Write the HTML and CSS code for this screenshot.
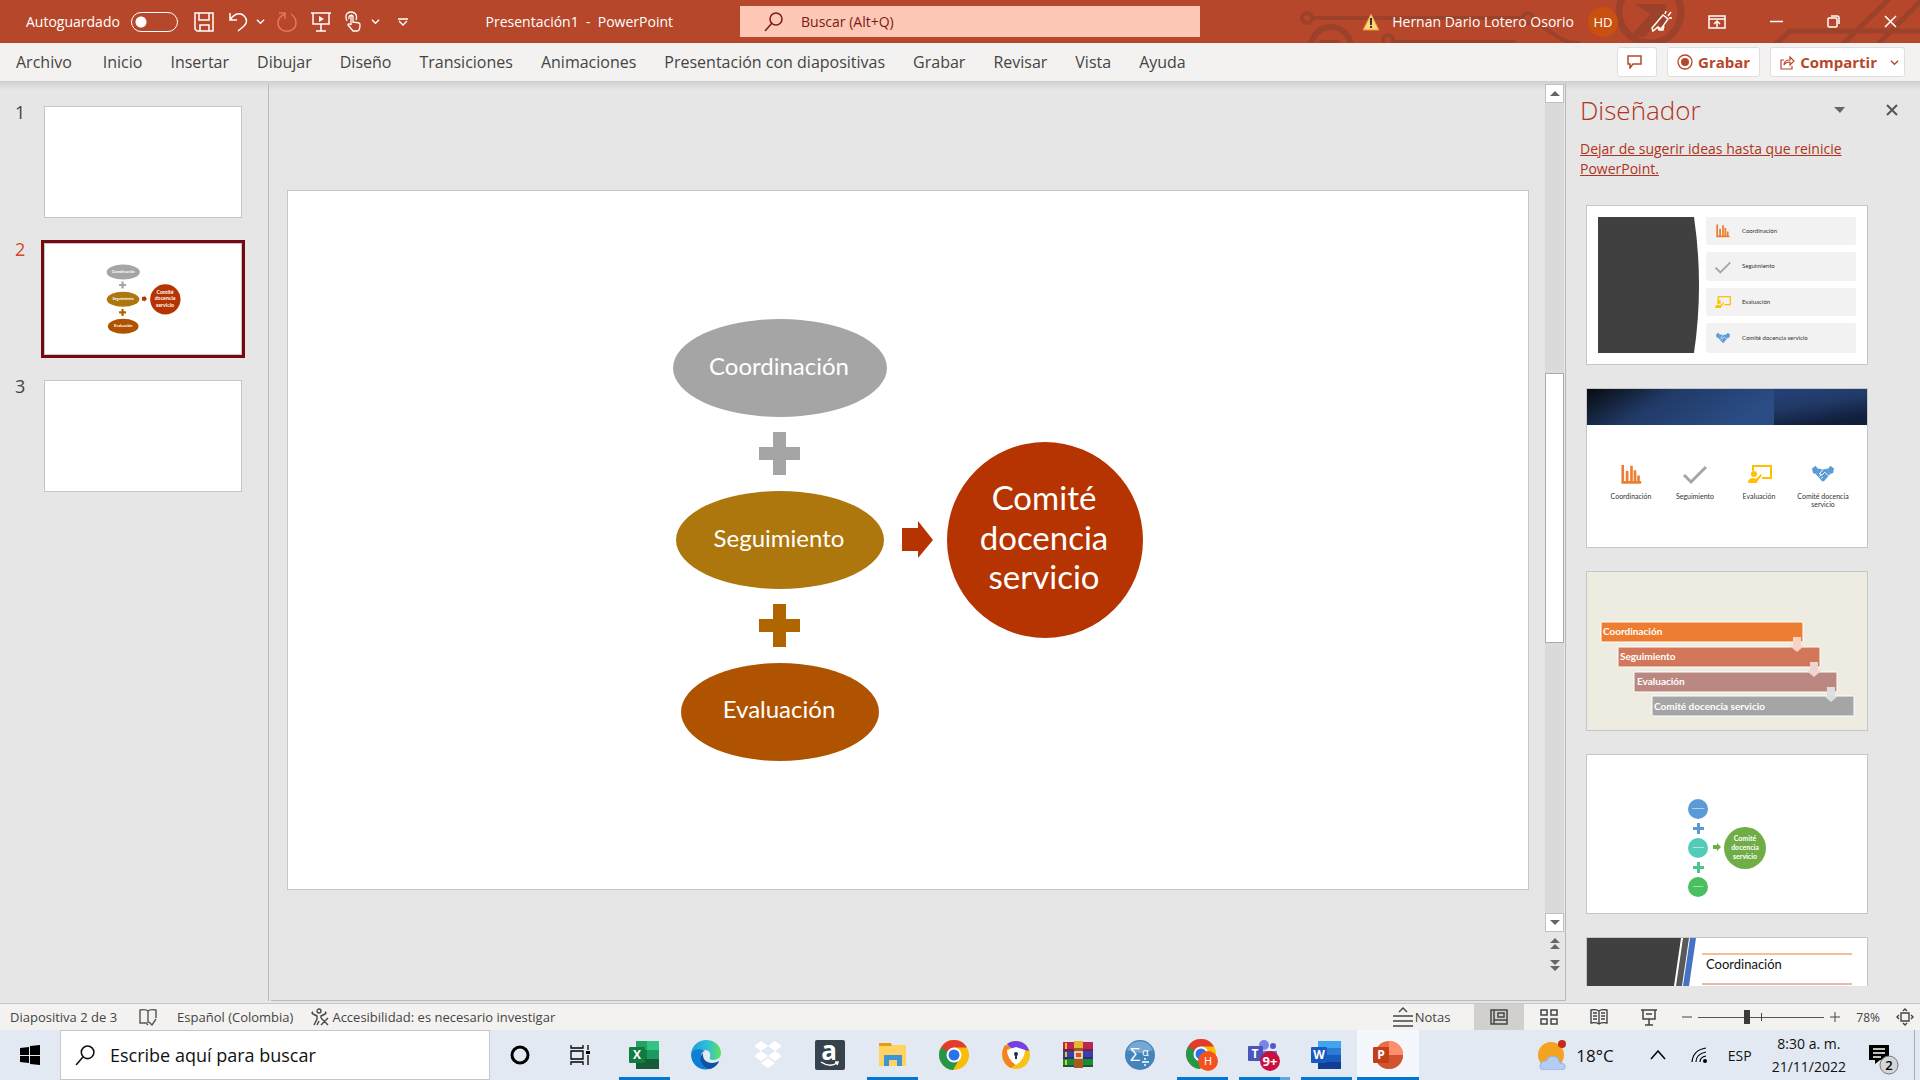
FILE: index.html
```html
<!DOCTYPE html>
<html lang="es">
<head>
    <meta charset="UTF-8">
    <meta name="viewport" content="width=device-width, initial-scale=1.0">
    <title>Presentación1 - PowerPoint</title>
    <link rel="stylesheet" href="styles.css">
</head>
<body>
    <!-- shared icons for the design ideas -->
    <svg class="defs" width="0" height="0" aria-hidden="true">
        <symbol id="i-chart" viewBox="0 0 24 24">
            <path d="M2 1v20h21M7 20V8M12 20V2M16 20V7M20 20v-7" fill="none" stroke="#ed7d31" stroke-width="3"/>
        </symbol>
        <symbol id="i-check" viewBox="0 0 24 24">
            <path d="M1 13l7 7L23 5" fill="none" stroke="#a5a5a5" stroke-width="3"/>
        </symbol>
        <symbol id="i-teach" viewBox="0 0 24 24">
            <path d="M5 9V4h18v12h-9" fill="none" stroke="#ffc000" stroke-width="2"/>
            <circle cx="6" cy="12" r="3" fill="#ffc000"/>
            <path d="M0 21c0-5 5-6 8-4l5-5 1 1-5 7v1z" fill="#ffc000"/>
        </symbol>
        <symbol id="i-hands" viewBox="0 0 24 24">
            <path d="M0 6l4-3 3 4-3 5-3-1zM24 6l-4-3-3 4 3 5 3-1z" fill="#5b9bd5"/>
            <path d="M7 6l5 1 5-1 3 6-7 8h-2l-7-8z" fill="#5b9bd5"/>
            <path d="M12 7l-4 5 3 1 3-3 5 5M8 15l2-2M10 17l2-2" fill="none" stroke="#fff"/>
        </symbol>
        <symbol id="i-search" viewBox="0 0 20 20">
            <circle cx="12" cy="7" r="6" fill="none" stroke="currentColor" stroke-width="1.5"/>
            <path d="M8 11l-7 8" fill="none" stroke="currentColor" stroke-width="1.5"/>
        </symbol>
        <symbol id="i-down" viewBox="0 0 10 10">
            <path d="M1 3l4 4 4-4" fill="none" stroke="currentColor" stroke-width="1.5"/>
        </symbol>
        <symbol id="i-chrome" viewBox="0 0 30 30">
            <circle cx="15" cy="15" r="15" fill="#fbbc05"/>
            <path d="M2 7.500A15 15 0 0 1 28 7.500H15L8 19z" fill="#e33b2e"/>
            <path d="M2 7.500A15 15 0 0 0 14 30l7-12-6-3z" fill="#27954a"/>
            <circle cx="15" cy="15" r="7.500" fill="#fff"/>
            <circle cx="15" cy="15" r="5.500" fill="#2b72ea"/>
        </symbol>
    </svg>

    <header class="titlebar">
        <svg class="circuit" width="620" height="43" viewBox="0 0 620 43" aria-hidden="true">
            <g fill="none" stroke="#9c422a" stroke-width="4">
                <circle cx="7" cy="18" r="5"/>
                <path d="M12 18h210"/>
                <circle cx="228" cy="18" r="5"/>
                <path d="M240 25l18 12q8 6 22 6"/>
                <circle cx="88" cy="40" r="5"/>
                <path d="M94 42h122"/>
                <circle cx="31" cy="47" r="20" stroke-width="6"/>
                <circle cx="350" cy="12" r="31" stroke-width="7"/>
                <path d="M474 45l16-14h130M542 45L590-2M577 45L622 0" stroke-width="5"/>
            </g>
            <path d="M334 4h32v26l-8-7-14 14h-14l20-23z" fill="#9c422a"/>
            <path d="M20 40h20v3H18z" fill="#9c422a"/>
        </svg>

        <div class="title-left">
            <label class="autosave">Autoguardado <input type="checkbox" class="toggle"></label>
            <button class="tool save" aria-label="Guardar">
                <svg width="20" height="20" viewBox="0 0 20 20"><path d="M1 1h18v18H3l-2-2zM5 1v7h10V1M6 19v-6h9v6" fill="none" stroke="#fff" stroke-width="1.5"/></svg>
            </button>
            <button class="tool undo" aria-label="Deshacer">
                <svg width="19" height="20" viewBox="0 0 19 20"><path d="M1 1v7h7M1 8C4 3 9 0 14 3c5 4 4 8 1 11l-6 5" fill="none" stroke="#fff" stroke-width="1.5"/></svg>
            </button>
            <button class="tool caret" aria-label="Más"><svg width="9" height="9"><use href="#i-down"/></svg></button>
            <button class="tool redo" aria-label="Repetir">
                <svg width="20" height="20" viewBox="0 0 20 20"><path d="M2 1h6v6M8 1v1C3 4 1 7 1 11c0 11 18 11 18 0 0-4-2-7-5-9" fill="none" stroke="#e8735a" stroke-width="1.5"/></svg>
            </button>
            <button class="tool show" aria-label="Presentar">
                <svg width="20" height="20" viewBox="0 0 20 20"><path d="M0 1h20M2 1v11h16V1M10 12v7M5 19h10" fill="none" stroke="#fff" stroke-width="1.5"/><path d="M8 4l5 3-5 3z" fill="#fff"/></svg>
            </button>
            <button class="tool touch" aria-label="Modo táctil">
                <svg width="16" height="21" viewBox="0 0 16 21"><path d="M2 10C-1 3 3 1 6 1s7 2 5 8M4 8C3 3 9 3 8 7v5M6 14V6c0-2 2-2 2 0v5l6 1c1 0 1 1 1 2 0 4-1 6-3 6H8l-5-6c0-2 2-1 3 0" fill="none" stroke="#fff" stroke-width="1.3"/></svg>
            </button>
            <button class="tool caret" aria-label="Más"><svg width="9" height="9"><use href="#i-down"/></svg></button>
            <button class="tool custom" aria-label="Personalizar">
                <svg width="10" height="8" viewBox="0 0 10 8"><path d="M0 1h10M1 3l4 4 4-4" fill="none" stroke="#fff" stroke-width="1.3"/></svg>
            </button>
            <h1 class="doc-title">Presentación1&nbsp; -&nbsp; PowerPoint</h1>
        </div>

        <label class="search">
            <svg width="20" height="20"><use href="#i-search"/></svg>
            <input type="text" placeholder="Buscar (Alt+Q)" aria-label="Buscar">
        </label>

        <div class="title-right">
            <svg class="warn" width="18" height="18" viewBox="0 0 18 18"><path d="M9 1l8 16H1z" fill="#ffd77a" stroke="#e8912d"/><path d="M9 5v7M9 13v2" stroke="#333" stroke-width="2"/></svg>
            <span class="user">Hernan Dario Lotero Osorio</span>
            <span class="avatar">HD</span>
            <button class="tool pen" aria-label="Novedades">
                <svg width="21" height="21" viewBox="0 0 21 21"><path d="M1 17L12 4l5 4-7 10-3-2-5 4zM7 16l1 3h4l1-4M14 3l1-3M17 5l3-4M18 7h3" fill="none" stroke="#fff" stroke-width="1.5"/></svg>
            </button>
            <button class="tool win" aria-label="Opciones de cinta">
                <svg width="18" height="14" viewBox="0 0 18 14"><path d="M1 1h16v12H1zM1 4h16M9 12V6M6 9l3-3 3 3" fill="none" stroke="#fff" stroke-width="1.5"/></svg>
            </button>
            <button class="tool win" aria-label="Minimizar">
                <svg width="13" height="13" viewBox="0 0 13 13"><path d="M0 6.500h13" stroke="#fff" stroke-width="1.5"/></svg>
            </button>
            <button class="tool win" aria-label="Restaurar">
                <svg width="13" height="13" viewBox="0 0 13 13"><path d="M1 4q0-1 1-1h7q1 0 1 1v7q0 1-1 1H2q-1 0-1-1zM4 1h6q2 0 2 2v6" fill="none" stroke="#fff" stroke-width="1.5"/></svg>
            </button>
            <button class="tool win" aria-label="Cerrar">
                <svg width="13" height="13" viewBox="0 0 13 13"><path d="M1 1l11 11M12 1L1 12" stroke="#fff" stroke-width="1.5"/></svg>
            </button>
        </div>
    </header>

    <nav class="ribbon">
        <button class="tab file-tab">Archivo</button>
        <button class="tab">Inicio</button>
        <button class="tab">Insertar</button>
        <button class="tab">Dibujar</button>
        <button class="tab">Diseño</button>
        <button class="tab">Transiciones</button>
        <button class="tab">Animaciones</button>
        <button class="tab">Presentación con diapositivas</button>
        <button class="tab">Grabar</button>
        <button class="tab">Revisar</button>
        <button class="tab">Vista</button>
        <button class="tab">Ayuda</button>
        <div class="ribbon-actions">
            <button class="action comment" aria-label="Comentarios">
                <svg width="15" height="14" viewBox="0 0 15 14"><path d="M1 1h13v8H6l-3 4V9H1z" fill="none" stroke="#b7472a" stroke-width="1.5"/></svg>
            </button>
            <button class="action">
                <svg width="16" height="16" viewBox="0 0 16 16"><circle cx="8" cy="8" r="7" fill="none" stroke="#b7472a" stroke-width="1.3"/><circle cx="8" cy="8" r="4" fill="#b7472a"/></svg>
                Grabar
            </button>
            <button class="action">
                <svg width="15" height="15" viewBox="0 0 15 15"><path d="M4 5H1v9h11v-3M4 10c0-4 3-5 6-5V2l4 4-4 4V7C8 7 5 8 4 10z" fill="none" stroke="#b7472a" stroke-width="1.2"/></svg>
                Compartir
                <svg class="share-caret" width="9" height="9"><use href="#i-down"/></svg>
            </button>
        </div>
    </nav>

    <main class="main">
        <aside class="slides">
            <button class="thumb-row"><span>1</span><span class="thumb"></span></button>
            <button class="thumb-row selected"><span>2</span>
                <span class="thumb">
                    <svg viewBox="0 0 1240 698" font-family="Lato, sans-serif" font-weight="700" fill="#fff" text-anchor="middle">
                        <ellipse cx="496" cy="182" rx="104" ry="47" fill="#a5a5a5"/>
                        <path d="M485 241h14v15h15v14h-15v15h-14v-15h-15v-14h15z" fill="#a5a5a5"/>
                        <ellipse cx="495" cy="352" rx="102" ry="47" fill="#ad770e"/>
                        <path d="M485 413h14v15h15v14h-15v15h-14v-15h-15v-14h15z" fill="#af6600"/>
                        <ellipse cx="496" cy="521" rx="96" ry="47" fill="#b05300"/>
                        <path d="M614 337h16v-7l15 19-15 19v-7h-16z" fill="#b53401"/>
                        <circle cx="760" cy="353" r="95" fill="#b53401"/>
                        <text x="496" y="187" font-size="24">Coordinación</text>
                        <text x="495" y="358" font-size="24">Seguimiento</text>
                        <text x="496" y="527" font-size="24">Evaluación</text>
                        <g font-size="33">
                            <text x="758" y="319">Comité</text>
                            <text x="758" y="360">docencia</text>
                            <text x="758" y="400">servicio</text>
                        </g>
                    </svg>
                </span>
            </button>
            <button class="thumb-row"><span>3</span><span class="thumb"></span></button>
        </aside>

        <section class="workspace">
            <div class="slide-area">
                <div class="slide">
                    <svg viewBox="0 0 1240 698" font-family="Lato, sans-serif" fill="#fff" text-anchor="middle">
                        <ellipse cx="492" cy="177" rx="107" ry="49" fill="#a5a5a5"/>
                        <path d="M485 241h13v15h14v13h-14v15h-13v-15h-14v-13h14z" fill="#a5a5a5"/>
                        <ellipse cx="492" cy="349" rx="104" ry="49" fill="#ad770e"/>
                        <path d="M485 413h13v15h14v13h-14v15h-13v-15h-14v-13h14z" fill="#af6600"/>
                        <ellipse cx="492" cy="521" rx="99" ry="49" fill="#b05300"/>
                        <path d="M614 337h16v-7l15 19-15 18v-7h-16z" fill="#b53401"/>
                        <circle cx="757" cy="349" r="98" fill="#b53401"/>
                        <g font-size="24">
                            <text x="491" y="184">Coordinación</text>
                            <text x="491" y="356">Seguimiento</text>
                            <text x="491" y="527">Evaluación</text>
                        </g>
                        <g font-size="33">
                            <text x="756" y="319">Comité</text>
                            <text x="756" y="359">docencia</text>
                            <text x="756" y="398">servicio</text>
                        </g>
                    </svg>
                </div>
            </div>
            <div class="scrollbar">
                <button class="scroll-btn" aria-label="Arriba"><svg width="10" height="5"><path d="M0 5l5-5 5 5z" fill="#666"/></svg></button>
                <div class="scroll-track"><div class="scroll-thumb"></div></div>
                <button class="scroll-btn" aria-label="Abajo"><svg width="10" height="5"><path d="M0 0h10L5 5z" fill="#666"/></svg></button>
                <button class="page-btn" aria-label="Diapositiva anterior"><svg width="10" height="11"><path d="M0 5l5-5 5 5zM0 11l5-5 5 5z" fill="#666"/></svg></button>
                <button class="page-btn" aria-label="Diapositiva siguiente"><svg width="10" height="11"><path d="M0 0h10L5 5zM0 6h10l-5 5z" fill="#666"/></svg></button>
            </div>
        </section>

        <aside class="designer">
            <div class="designer-head">
                <h2>Diseñador</h2>
                <button class="panel-menu" aria-label="Opciones"><svg width="11" height="7"><path d="M0 0h11L6 6z" fill="#666"/></svg></button>
                <button class="panel-close" aria-label="Cerrar panel"><svg width="12" height="12"><path d="M1 1l10 10M11 1L1 11" stroke="#555" stroke-width="2"/></svg></button>
            </div>
            <a href="#" class="stop-link">Dejar de sugerir ideas hasta que reinicie PowerPoint.</a>

            <div class="ideas">
                <button class="idea">
                    <svg viewBox="0 0 280 158" font-family="Lato, sans-serif" font-size="6" fill="#333">
                        <path d="M11 11h96q10 68 0 136H11z" fill="#404040"/>
                        <g fill="#f2f2f2">
                            <rect x="119" y="11" width="150" height="28" rx="2"/>
                            <rect x="119" y="46" width="150" height="29" rx="2"/>
                            <rect x="119" y="82" width="150" height="28" rx="2"/>
                            <rect x="119" y="117" width="150" height="30" rx="2"/>
                        </g>
                        <use href="#i-chart" x="129" y="18" width="14" height="14"/>
                        <use href="#i-check" x="128" y="53" width="16" height="16"/>
                        <use href="#i-teach" x="128" y="88" width="16" height="16"/>
                        <use href="#i-hands" x="129" y="125" width="14" height="14"/>
                        <text x="155" y="27">Coordinación</text>
                        <text x="155" y="62">Seguimiento</text>
                        <text x="155" y="98">Evaluación</text>
                        <text x="155" y="134">Comité docencia servicio</text>
                    </svg>
                </button>
                <button class="idea">
                    <svg viewBox="0 0 280 158" font-family="Lato, sans-serif" font-size="7" fill="#333" text-anchor="middle">
                        <defs>
                            <linearGradient id="banner" x1="0" y1="0" x2="1" y2=".3">
                                <stop offset="0" stop-color="#070b0e"/>
                                <stop offset=".45" stop-color="#213b68"/>
                                <stop offset="1" stop-color="#2b4c85"/>
                            </linearGradient>
                            <linearGradient id="bannerEnd" x1="0" y1="0" x2=".4" y2="1">
                                <stop offset="0" stop-color="#23427a"/>
                                <stop offset=".5" stop-color="#213966"/>
                                <stop offset="1" stop-color="#101f3b"/>
                            </linearGradient>
                        </defs>
                        <path d="M0 0h187v36H0z" fill="url(#banner)"/>
                        <path d="M187 0h93v36h-93z" fill="url(#bannerEnd)"/>
                        <use href="#i-chart" x="34" y="75" width="21" height="21"/>
                        <use href="#i-check" x="96" y="73" width="24" height="24"/>
                        <use href="#i-teach" x="161" y="73" width="24" height="24"/>
                        <use href="#i-hands" x="225" y="74" width="22" height="22"/>
                        <text x="44" y="110">Coordinación</text>
                        <text x="108" y="110">Seguimiento</text>
                        <text x="172" y="110">Evaluación</text>
                        <text x="236" y="110">Comité docencia</text>
                        <text x="236" y="118">servicio</text>
                    </svg>
                </button>
                <button class="idea">
                    <svg viewBox="0 0 280 158" font-family="Lato, sans-serif" font-size="10" font-weight="700" fill="#fff">
                        <path d="M0 0h280v158H0z" fill="#eeebe0"/>
                        <g stroke="#fff">
                            <rect x="14" y="50" width="202" height="20" rx="1" fill="#ed7d31"/>
                            <rect x="31" y="75" width="202" height="20" rx="1" fill="#d27759"/>
                            <rect x="47" y="100" width="203" height="20" rx="1" fill="#ba8880"/>
                            <rect x="65" y="124" width="202" height="20" rx="1" fill="#a5a5a5"/>
                        </g>
                        <path d="M206 65h8v9h3l-7 6-7-6h3z" fill="#f8d2c6"/>
                        <path d="M223 90h8v9h3l-7 6-7-6h3z" fill="#efd5d0"/>
                        <path d="M240 115h8v9h3l-7 6-7-6h3z" fill="#dfdede"/>
                        <text x="16" y="63">Coordinación</text>
                        <text x="33" y="88">Seguimiento</text>
                        <text x="50" y="113">Evaluación</text>
                        <text x="67" y="138">Comité docencia servicio</text>
                    </svg>
                </button>
                <button class="idea">
                    <svg viewBox="0 0 280 158" font-family="Lato, sans-serif" font-weight="700" fill="#fff" text-anchor="middle">
                        <circle cx="111" cy="54" r="10" fill="#5b9bd5"/>
                        <path d="M110 68h3v4h4v3h-4v4h-3v-4h-4v-3h4z" fill="#5b9bd5"/>
                        <circle cx="111" cy="93" r="10" fill="#52cbb8"/>
                        <path d="M110 107h3v4h4v3h-4v4h-3v-4h-4v-3h4z" fill="#4dc48d"/>
                        <circle cx="111" cy="132" r="10" fill="#48c05f"/>
                        <path d="M126 90h4v-2l4 4-4 4v-2h-4z" fill="#70ad47"/>
                        <circle cx="158" cy="93" r="21" fill="#70ad47"/>
                        <g font-size="2">
                            <text x="111" y="54">Coordinación</text>
                            <text x="111" y="93">Seguimiento</text>
                            <text x="111" y="132">Evaluación</text>
                        </g>
                        <g font-size="7">
                            <text x="158" y="86">Comité</text>
                            <text x="158" y="95">docencia</text>
                            <text x="158" y="104">servicio</text>
                        </g>
                    </svg>
                </button>
                <button class="idea">
                    <svg viewBox="0 0 280 158" font-family="Lato, sans-serif" font-size="13" fill="#111">
                        <path d="M0 0h94L71 158H0z" fill="#404040"/>
                        <path d="M96 0h6L79 158h-6z" fill="#595959"/>
                        <path d="M103 0h6L86 158h-6z" fill="#4472c4"/>
                        <path d="M115 16h150" stroke="#ed7d31"/>
                        <path d="M115 46h150" stroke="#d27759"/>
                        <text x="119" y="31">Coordinación</text>
                    </svg>
                </button>
            </div>
        </aside>
    </main>

    <footer class="statusbar">
        <span class="slide-count">Diapositiva 2 de 3</span>
        <button class="plain proof" aria-label="Ortografía">
            <svg width="18" height="18" viewBox="0 0 18 18"><path d="M9 3v12M9 3Q7 1 1 2v13h6l2 2M9 3q2-2 8-1v8M10 14l3 3 4-6" fill="none" stroke="#555" stroke-width="1.4"/></svg>
        </button>
        <button class="plain lang">Español (Colombia)</button>
        <button class="plain access">
            <svg width="18" height="18" viewBox="0 0 18 18"><circle cx="8" cy="3" r="2" fill="none" stroke="#444" stroke-width="1.3"/><path d="M2 4Q0 5 2 6l4 2v3l-3 6M14 4q2 1 0 2l-4 2v2M6 17l2-4M10 10l7 7M17 10l-7 7" fill="none" stroke="#444" stroke-width="1.4"/></svg>
            Accesibilidad: es necesario investigar
        </button>
        <div class="views">
            <button class="plain notes">
                <svg width="20" height="20" viewBox="0 0 20 20"><path d="M6 5l4-4 4 4M0 9h20M0 14h20M0 19h20" fill="none" stroke="#444" stroke-width="1.4"/></svg>Notas
            </button>
            <button class="view active" aria-label="Normal">
                <svg width="18" height="16" viewBox="0 0 18 16"><path d="M1 1h16v14H1zM4 1v14M4 11h13M8 4h6v4H8z" fill="none" stroke="#444" stroke-width="1.5"/></svg>
            </button>
            <button class="view" aria-label="Clasificador">
                <svg width="18" height="16" viewBox="0 0 18 16"><path d="M1 1h6v5H1zM11 1h6v5h-6zM1 10h6v5H1zM11 10h6v5h-6z" fill="none" stroke="#444" stroke-width="1.5"/></svg>
            </button>
            <button class="view" aria-label="Lectura">
                <svg width="18" height="16" viewBox="0 0 18 16"><path d="M9 2v13M9 2Q6 0 1 1v13q5-1 8 1 3-2 8-1V1Q12 0 9 2M3 4h4M3 7h4M3 10h4M11 4h4M11 7h4M11 10h4" fill="none" stroke="#444" stroke-width="1.4"/></svg>
            </button>
            <button class="view" aria-label="Presentación">
                <svg width="16" height="17" viewBox="0 0 16 17"><path d="M0 1h16M2 1v9h12V1M8 10v6M4 16h8M5 5h6" fill="none" stroke="#444" stroke-width="1.5"/></svg>
            </button>
        </div>
        <div class="zoom">
            <button class="plain" aria-label="Alejar"><svg width="10" height="10"><path d="M0 5h10" stroke="#444"/></svg></button>
            <div class="zoom-slide"><input type="range" min="0" max="100" value="38" aria-label="Zoom"></div>
            <button class="plain" aria-label="Acercar"><svg width="10" height="10"><path d="M0 5h10M5 0v10" stroke="#444"/></svg></button>
            <button class="plain percent">78%</button>
            <button class="plain" aria-label="Ajustar">
                <svg width="18" height="18" viewBox="0 0 18 18"><path d="M5 5h8v8H5zM7 3l2-2 2 2M7 15l2 2 2-2M3 7L1 9l2 2M15 7l2 2-2 2" fill="none" stroke="#444" stroke-width="1.4"/></svg>
            </button>
        </div>
    </footer>

    <div class="taskbar">
        <button class="start" aria-label="Inicio">
            <svg width="20" height="20" viewBox="0 0 20 20"><path d="M0 3l9-1v8H0zM10 1l10-1v10H10zM0 11h9v7l-9-1zM10 11h10v9l-10-1z" fill="#000"/></svg>
        </button>
        <label class="task-search">
            <svg width="21" height="21"><use href="#i-search"/></svg>
            <input type="text" placeholder="Escribe aquí para buscar" aria-label="Buscar en Windows">
        </label>
        <button class="task-tool" aria-label="Cortana"><svg width="20" height="20"><circle cx="10" cy="10" r="8" fill="none" stroke="#000" stroke-width="3"/></svg></button>
        <button class="task-tool" aria-label="Vista de tareas">
            <svg width="20" height="20" viewBox="0 0 20 20"><path d="M1 0v3h12V0M1 6h12v8H1zM1 20v-3h12v3M18 0v5M18 10v10" fill="none" stroke="#000" stroke-width="1.3"/><path d="M16 6h4v3h-4z"/></svg>
        </button>
        <div class="apps">
            <button class="app running" aria-label="Excel">
                <svg width="30" height="30" viewBox="0 0 30 30"><path d="M7 1h11v9H7z" fill="#21a366"/><path d="M18 1h12v9H18z" fill="#33c481"/><path d="M7 10h11v9H7z" fill="#107c41"/><path d="M18 10h12v9H18z" fill="#1a9a5c"/><path d="M7 19h23v10H7z" fill="#185c37"/><rect y="7" width="16" height="16" rx="1" fill="#107c41"/><text x="8" y="19" font-family="Open Sans" font-size="12" font-weight="700" fill="#fff" text-anchor="middle">X</text></svg>
            </button>
            <button class="app" aria-label="Edge">
                <svg width="30" height="30" viewBox="0 0 30 30">
                    <defs><linearGradient id="edge"><stop offset="0" stop-color="#1b9de2"/><stop offset=".6" stop-color="#33c3cf"/><stop offset="1" stop-color="#63df58"/></linearGradient></defs>
                    <path d="M0 14C1 5 8 0 15 0c9 0 15 6 15 13 0 5-4 7-8 7-3 0-4-1-3-3 1-4-1-7-5-7C8 10 3 11 0 14z" fill="url(#edge)"/>
                    <path d="M0 14c2-5 9-6 14-3-5 1-5 7-2 12 3 4 9 6 11 4-9 6-23 1-23-13z" fill="#0f7fd6"/>
                    <path d="M12 13c-5 4-2 14 6 16 4 0 9-4 10-8-7 4-17 2-16-8z" fill="#0f54a0"/>
                </svg>
            </button>
            <button class="app" aria-label="Dropbox">
                <svg width="30" height="30" viewBox="0 0 30 30"><path d="M8 1l7 5-7 5-7-5zM22 1l7 5-7 5-7-5zM8 11l7 5-7 5-7-5zM22 11l7 5-7 5-7-5zM8 23l7-5 7 5-7 5z" fill="#fff"/></svg>
            </button>
            <button class="app" aria-label="Amazon">
                <svg class="overflow" width="30" height="30" viewBox="0 0 30 30"><rect width="30" height="30" rx="2" fill="#37424d"/><text x="14" y="20" font-family="Open Sans" font-size="26" font-weight="700" fill="#fff" text-anchor="middle">a</text><path d="M6 22q9 6 16 1M20 22h3l-1 3" fill="none" stroke="#fff" stroke-width="1.5"/></svg>
            </button>
            <button class="app running" aria-label="Explorador">
                <svg width="30" height="30" viewBox="0 0 30 30"><path d="M2 3h12l1 3H2z" fill="#e2a10a"/><path d="M2 6h12l2-1h13v21H2z" fill="#ffd262"/><path d="M7 26V15h18v11h-5v-6h-8v6z" fill="#3d95d5"/></svg>
            </button>
            <button class="app" aria-label="Chrome"><svg width="30" height="30"><use href="#i-chrome"/></svg></button>
            <button class="app" aria-label="Navegador seguro">
                <svg width="30" height="30" viewBox="0 0 30 30"><circle cx="15" cy="15" r="14" fill="#f6c316"/><path d="M4 5C-1 12 1 24 10 28l4-3-7-10 2-9z" fill="#f58220"/><path d="M6 4c7-6 20-3 22 7l-4-1-14-2z" fill="#7440e8"/><path d="M6 10l9-3 9 3q0 9-9 15-9-6-9-15z" fill="#fff"/><circle cx="15" cy="14" r="2" fill="#222c55"/><path d="M14 14h2v5h-2z" fill="#222c55"/></svg>
            </button>
            <button class="app" aria-label="WinRAR">
                <svg width="30" height="30" viewBox="0 0 30 30"><path d="M0 2h30v9H0z" fill="#c02450"/><path d="M0 11h30v8H0z" fill="#3a3fae"/><path d="M0 19h30v8H0z" fill="#178b3a"/><path d="M0 10h30M0 18h30M0 26h30" stroke="#222"/><path d="M3 3v6M3 12v5M3 20v5" stroke="#f1c40f" stroke-width="2"/><path d="M11 1h9v27h-9z" fill="#a85a1c"/><path d="M11 1h9v7h-9z" fill="#e8b62c"/><path d="M12 12h7v6h-7z" fill="#d4531b" stroke="#eee" stroke-width="1.5"/></svg>
            </button>
            <button class="app" aria-label="SPSS">
                <svg width="30" height="30" viewBox="0 0 30 30"><circle cx="15" cy="15" r="15" fill="#4384bb"/><path d="M2 10a14 14 0 0 1 26 0q-12 6-26 0z" fill="#73a9d3"/><g font-family="Open Sans" fill="#fff"><text x="5" y="21" font-size="18">Σ</text><text x="17" y="16" font-size="11">α</text></g><path d="M17 22h7M20 18v2M20 24v2" stroke="#fff" stroke-width="1.5"/></svg>
            </button>
            <button class="app running" aria-label="Chrome H">
                <svg width="32" height="32" viewBox="0 0 32 32"><use href="#i-chrome" width="30" height="30"/><circle cx="22" cy="22" r="10" fill="#f4511e"/><text x="22" y="26" font-family="Open Sans" font-size="11" fill="#fff" text-anchor="middle">H</text></svg>
            </button>
            <button class="app running grouped" aria-label="Teams">
                <svg width="32" height="32" viewBox="0 0 32 32"><circle cx="16" cy="6" r="5" fill="#7b83eb"/><circle cx="25" cy="7" r="3" fill="#5059c9"/><path d="M12 12h17v8q-2 8-9 8t-8-8z" fill="#6a73d8"/><rect y="7" width="15" height="15" rx="1" fill="#4b53bc"/><text x="7" y="19" font-family="Open Sans" font-size="12" font-weight="700" fill="#fff" text-anchor="middle">T</text><circle cx="22" cy="22" r="10" fill="#c8103e"/><text x="22" y="27" font-family="Open Sans" font-size="13" font-weight="700" fill="#fff" text-anchor="middle">9+</text></svg>
            </button>
            <button class="app running" aria-label="Word">
                <svg width="30" height="30" viewBox="0 0 30 30"><path d="M7 1h23v7H7z" fill="#41a5ee"/><path d="M7 8h23v7H7z" fill="#2b7cd3"/><path d="M7 15h23v7H7z" fill="#185abd"/><path d="M7 22h23v7H7z" fill="#103f91"/><rect y="7" width="16" height="16" rx="1" fill="#185abd"/><text x="8" y="19" font-family="Open Sans" font-size="12" font-weight="700" fill="#fff" text-anchor="middle">W</text></svg>
            </button>
            <button class="app running current" aria-label="PowerPoint">
                <svg width="30" height="30" viewBox="0 0 30 30"><circle cx="16" cy="15" r="14" fill="#ed6c47"/><path d="M16 1a14 14 0 0 1 14 14H16z" fill="#ff8f6b"/><path d="M2 15h28a14 14 0 0 1-28 0z" fill="#d35230"/><rect y="7" width="16" height="16" rx="1" fill="#c43e1c"/><text x="8" y="19" font-family="Open Sans" font-size="12" font-weight="700" fill="#fff" text-anchor="middle">P</text></svg>
            </button>
        </div>
        <div class="tray">
            <button class="weather">
                <svg width="28" height="30" viewBox="0 0 28 30"><circle cx="13" cy="15" r="13" fill="#f4a321"/><circle cx="24" cy="4" r="4" fill="#c42b1c"/><path d="M6 30q-6-1-3-7 2-3 5-2 4-8 12-3l2 5q6 0 5 5l-2 2z" fill="#b3cdf5" stroke="#8fb2e8"/></svg>
                18°C
            </button>
            <button class="tray-btn chevron" aria-label="Iconos ocultos"><svg width="16" height="10"><path d="M1 9l7-8 7 8" fill="none" stroke="#000" stroke-width="1.5"/></svg></button>
            <button class="tray-btn wifi" aria-label="Red"><svg width="16" height="16" viewBox="0 0 16 16"><path d="M1 15Q2 3 15 1M5 15q0-8 10-10M9 15q0-5 6-6" fill="none" stroke="#000" stroke-width="1.2"/><circle cx="14" cy="14" r="2"/></svg></button>
            <button class="tray-btn language">ESP</button>
            <button class="tray-btn clock"><span>8:30 a. m.</span><span>21/11/2022</span></button>
            <button class="tray-btn notice" aria-label="Notificaciones">
                <svg width="30" height="30" viewBox="0 0 30 30"><path d="M0 0h20v15h-9l-5 4v-4H0z"/><path d="M4 4h12M4 8h12M4 12h8" stroke="#fff" stroke-width="1.5"/><circle cx="20" cy="20" r="9" fill="#d4d6d9" stroke="#777"/><text x="20" y="25" font-family="Open Sans" font-size="13" font-weight="600" text-anchor="middle">2</text></svg>
            </button>
        </div>
    </div>
</body>
</html>
```
FILE: styles.css
```css
* {
    box-sizing: border-box;
}
body {
    margin: 0;
    height: 100vh;
    display: flex;
    flex-direction: column;
    overflow: hidden;
    font-family: 'Open Sans', 'Noto Sans', sans-serif;
    font-size: 15px;
    background: #e6e6e6;
    color: #444;
}
button, input {
    font: inherit;
    color: inherit;
    padding: 0;
    border: none;
    background: none;
}
svg {
    display: block;
    flex: none;
}
.overflow {
    overflow: visible;
}
h1, h2 {
    margin: 0;
}
.defs {
    position: absolute;
}

/* title bar */
.titlebar {
    position: relative;
    display: grid;
    grid-template-columns: 37fr 23fr 36fr;
    flex: none;
    height: 43px;
    background: #b7472a;
    color: #fff;
    font-size: 14px;
    white-space: nowrap;
}
.circuit {
    position: absolute;
    top: 0;
    right: 0;
}
.title-left, .title-right {
    position: relative;
    display: flex;
    align-items: center;
    min-width: 0;
}
.title-left {
    padding-left: 26px;
}
.autosave {
    display: flex;
    align-items: center;
    justify-content: space-between;
    width: 152px;
    margin-right: 16px;
}
.toggle {
    appearance: none;
    width: 47px;
    height: 20px;
    margin: 0;
    border: 1px solid #fff;
    border-radius: 10px;
    background: radial-gradient(circle at 9px 9px, #fff 5px, transparent 6px);
}
.undo {
    margin-left: 15px;
}
.caret {
    margin-left: 8px;
}
.redo {
    margin-left: 12px;
}
.show, .touch {
    margin-left: 14px;
}
.custom {
    margin-left: 18px;
}
.touch + .caret {
    margin-left: 10px;
}
.doc-title {
    margin-left: auto;
    margin-right: 67px;
    font-size: 14px;
    font-weight: 400;
}
.search {
    display: flex;
    align-items: center;
    gap: 17px;
    margin: 6px 0;
    padding-left: 24px;
    background: #fdc8b5;
    color: #7b1a17;
}
.search input {
    flex: 1;
    min-width: 0;
}
input::placeholder {
    color: inherit;
    opacity: 1;
}
.title-right {
    justify-content: flex-end;
    padding-right: 23px;
}
.user {
    margin: 0 14px 0 12px;
}
.avatar {
    width: 30px;
    height: 30px;
    margin-right: 33px;
    border-radius: 50%;
    background: #ca5010;
    font-size: 13px;
    line-height: 30px;
    text-align: center;
}
.pen {
    margin-right: 36px;
}
.win {
    margin-left: 44px;
}
.pen + .win {
    margin-left: 0;
}

/* ribbon tabs */
.ribbon {
    display: flex;
    align-items: center;
    flex: none;
    height: 38px;
    background: #f3f2f1;
    font-size: 16px;
    white-space: nowrap;
}
.tab {
    padding: 0 14px;
}
.file-tab {
    padding: 0 17px 0 16px;
}
.ribbon-actions {
    display: flex;
    gap: 10px;
    margin-left: auto;
    padding-right: 15px;
}
.action {
    display: flex;
    align-items: center;
    gap: 5px;
    height: 30px;
    padding: 0 9px;
    border: 1px solid #e1dfdd;
    border-radius: 3px;
    background: #fff;
    color: #b7472a;
    font-size: 15px;
    font-weight: 700;
}
.comment {
    width: 40px;
}
.share-caret {
    margin-left: 8px;
    margin-right: -4px;
}

/* work area */
.main {
    position: relative;
    display: flex;
    flex: 1;
    min-height: 0;
    padding: 3px 0 2px;
}
.main::before {
    content: "";
    position: absolute;
    top: 0;
    left: 0;
    right: 0;
    height: 9px;
    background: linear-gradient(#cfcfcf, #e6e6e6);
}
.slides {
    position: relative;
    display: flex;
    flex-direction: column;
    align-items: flex-start;
    gap: 19px;
    width: 269px;
    flex: none;
    padding: 19px 0 0 15px;
    border-right: 1px solid #b9b9b9;
}
.thumb-row {
    display: flex;
    align-items: flex-start;
    font-size: 18px;
    line-height: 18px;
    text-align: left;
}
.thumb-row > span:first-child {
    width: 26px;
}
.thumb {
    width: 204px;
    height: 118px;
    border: 3px solid transparent;
    background: #fff content-box;
    outline: 1px solid #c6c6c6;
    outline-offset: -4px;
}
.thumb svg {
    width: 100%;
}
.selected {
    color: #d24726;
}
.selected .thumb {
    border-color: #77080f;
}
.workspace {
    position: relative;
    display: flex;
    flex: 1;
    min-width: 0;
    margin-left: 2px;
    padding-right: 1px;
    border-right: 1px solid #b9b9b9;
    border-bottom: 1px solid #b9b9b9;
}
.slide-area {
    flex: 1;
    display: flex;
    align-items: center;
    min-width: 0;
    padding: 0 16px 4px;
}
.slide {
    width: 100%;
    border: 1px solid #c6c6c6;
    background: #fff;
}
.slide svg {
    width: 100%;
}
.scrollbar {
    display: flex;
    flex-direction: column;
    width: 19px;
    padding-bottom: 24px;
}
.scroll-btn {
    display: grid;
    place-items: center;
    height: 19px;
    border: 1px solid #c0c0c0;
    background: #fff;
}
.scroll-track {
    flex: 1;
    background: #dadada;
}
.scroll-thumb {
    height: 270px;
    margin-top: 270px;
    border: 1px solid #ababab;
    background: #fff;
}
.page-btn {
    display: grid;
    place-items: center;
    height: 22px;
}

/* designer panel */
.designer {
    position: relative;
    display: flex;
    flex-direction: column;
    width: 354px;
    flex: none;
    padding: 5px 22px 15px 14px;
}
.designer-head {
    display: flex;
    align-items: center;
    height: 42px;
}
.designer-head h2 {
    color: #b0331b;
    font-size: 26px;
    font-weight: 300;
}
.panel-menu {
    margin-left: auto;
}
.panel-close {
    margin-left: 41px;
}
.stop-link {
    width: 280px;
    margin-top: 8px;
    color: #b0331b;
    font-size: 14px;
    line-height: 20px;
}
.ideas {
    display: flex;
    flex-direction: column;
    flex: 1;
    gap: 23px;
    min-height: 0;
    margin-top: 26px;
    margin-left: 6px;
    overflow: hidden;
}
.idea {
    width: 282px;
    flex: none;
    border: 1px solid #c6c6c6;
    background: #fff;
}
.idea svg {
    width: 100%;
}

/* status bar */
.statusbar {
    display: flex;
    align-items: center;
    flex: none;
    height: 27px;
    padding: 0 6px 0 10px;
    border-top: 1px solid #c6c6c6;
    background: #f3f2f1;
    font-size: 13px;
    white-space: nowrap;
}
.plain {
    display: flex;
    align-items: center;
}
.proof {
    margin: 0 20px 0 22px;
}
.access {
    gap: 3px;
    margin-left: 18px;
}
.views {
    display: flex;
    align-items: center;
    align-self: stretch;
    margin-left: auto;
}
.notes {
    gap: 2px;
    margin-right: 24px;
}
.view {
    display: grid;
    place-items: center;
    width: 50px;
    height: 100%;
}
.active {
    background: #d2d0ce;
}
.zoom {
    display: flex;
    align-items: center;
    gap: 6px;
    margin-left: 8px;
}
.zoom-slide {
    position: relative;
    width: 126px;
}
.zoom-slide::after {
    content: "";
    position: absolute;
    left: 50%;
    top: 50%;
    width: 1px;
    height: 8px;
    margin-top: -4px;
    background: #444;
}
.zoom-slide input {
    appearance: none;
    display: block;
    width: 100%;
    height: 14px;
    margin: 0;
    background: linear-gradient(#555, #555) center / 100% 1px no-repeat;
}
.zoom-slide input::-webkit-slider-thumb {
    appearance: none;
    width: 6px;
    height: 14px;
    background: #3b3a39;
}
.percent {
    margin: 0 10px;
    font-size: 12px;
}

/* taskbar */
.taskbar {
    display: flex;
    align-items: stretch;
    flex: none;
    height: 50px;
    background: #e3e9f2;
    color: #111;
    white-space: nowrap;
}
.start, .task-tool, .app, .tray-btn {
    display: grid;
    place-items: center;
}
.start {
    width: 60px;
}
.task-search {
    display: flex;
    align-items: center;
    gap: 14px;
    width: 430px;
    padding-left: 14px;
    border: 1px solid #c6c8cc;
    background: #fff;
    font-size: 18px;
}
.task-search input {
    flex: 1;
    min-width: 0;
}
.task-tool {
    width: 60px;
}
.apps {
    display: flex;
    margin-left: 3px;
}
.app {
    position: relative;
    width: 62px;
}
.running::after {
    content: "";
    position: absolute;
    left: 6px;
    right: 5px;
    bottom: 0;
    height: 3px;
    background: #0078d7;
}
.grouped::after {
    background: linear-gradient(90deg, #0078d7 41px, #5aa9e6 41px);
}
.current {
    background: #f4f7fb;
}
.current::after {
    left: 0;
    right: 0;
}
.tray {
    display: flex;
    margin-left: auto;
    margin-right: 5px;
    padding-right: 15px;
    border-right: 1px solid #a9afb8;
}
.weather {
    display: flex;
    align-items: center;
    gap: 10px;
    margin-right: 36px;
    font-size: 17px;
}
.chevron {
    margin-right: 25px;
}
.wifi {
    margin-right: 21px;
}
.language {
    margin-right: 20px;
    font-size: 14px;
}
.clock {
    align-content: center;
    margin-right: 23px;
    font-size: 14px;
    line-height: 23px;
}
.notice {
    padding-top: 10px;
}
```
